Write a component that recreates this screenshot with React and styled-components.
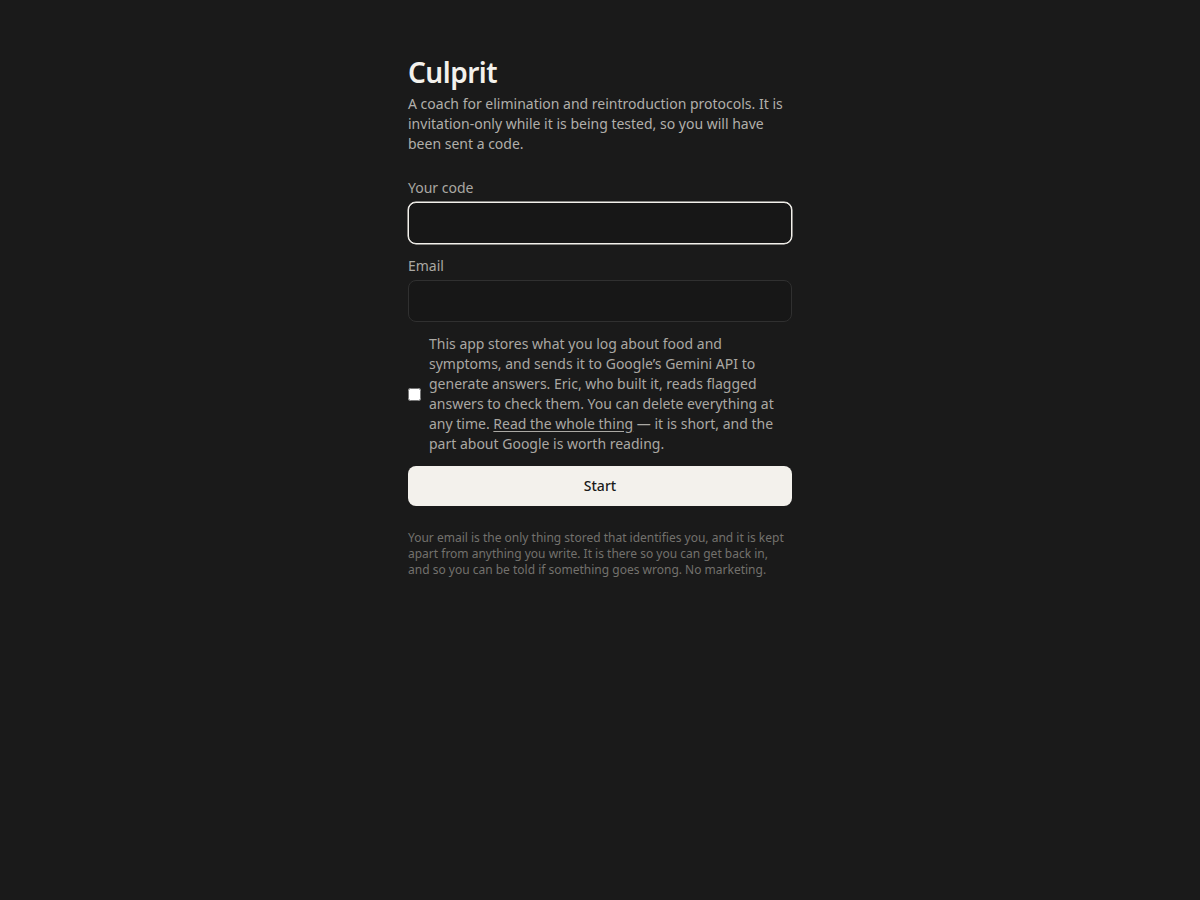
import styled, { createGlobalStyle } from "styled-components";

const GlobalStyle = createGlobalStyle`
  html, body {
    margin: 0;
    background: #1a1a1a;
    color: #f3f1ec;
    font-family: "Noto Sans", "Open Sans", sans-serif;
  }
  * { box-sizing: border-box; }
`;

const Page = styled.main`
  max-width: 384px;
  margin: 0 auto;
  padding-top: 55px;
  display: flex;
  flex-direction: column;
`;

const Title = styled.h1`
  margin: 0 0 4px;
  font-size: 28px;
  line-height: 35px;
  font-weight: 600;
  color: #f3f1ec;
  letter-spacing: -0.5px;
`;

const Intro = styled.p`
  margin: 0 0 24px;
  font-size: 14px;
  line-height: 20px;
  color: #b1afaa;
`;

const Form = styled.form`
  display: flex;
  flex-direction: column;
`;

const Field = styled.div`
  display: flex;
  flex-direction: column;
  gap: 4px;
  margin-bottom: 12px;
`;

const Label = styled.label`
  font-size: 14px;
  line-height: 20px;
  color: #aaa8a3;
`;

const Input = styled.input`
  height: 42px;
  width: 100%;
  padding: 0 12px;
  border-radius: 8px;
  border: 1px solid #303030;
  background: #171717;
  color: #f3f1ec;
  font: inherit;
  font-size: 15px;
  outline: none;

  &:focus {
    border-color: #f3f1ec;
    box-shadow: 0 0 0 0.5px #f3f1ec;
  }
`;

const Consent = styled.label`
  display: flex;
  align-items: center;
  gap: 8px;
  margin: 0 0 12px;
  font-size: 14px;
  line-height: 20px;
  color: #aaa8a3;

  input {
    margin: 1px 0 0;
    width: 13px;
    height: 13px;
    flex: none;
  }

  a {
    color: inherit;
    text-decoration: underline;
    text-underline-offset: 2px;
  }
`;

const Button = styled.button`
  height: 40px;
  width: 100%;
  border: none;
  border-radius: 8px;
  background: #f3f1ec;
  color: #1a1a1a;
  font: inherit;
  font-size: 14px;
  line-height: 18px;
  font-weight: 500;
  padding: 0 0 1px;
  cursor: pointer;
`;

const Footnote = styled.p`
  margin: 24px 0 0;
  font-size: 12px;
  line-height: 16px;
  color: #73716d;
`;

export default function App() {
  return (
    <>
      <GlobalStyle />
      <Page>
        <Title>Culprit</Title>
        <Intro>
          A coach for elimination and reintroduction protocols. It is invitation-only while it
          is being tested, so you will have been sent a code.
        </Intro>
        <Form onSubmit={(e) => e.preventDefault()}>
          <Field>
            <Label htmlFor="code">Your code</Label>
            <Input id="code" type="text" autoFocus />
          </Field>
          <Field>
            <Label htmlFor="email">Email</Label>
            <Input id="email" type="email" />
          </Field>
          <Consent>
            <input type="checkbox" />
            <span>
              This app stores what you log about food and symptoms, and sends it to Google’s
              Gemini API to generate answers. Eric, who built it, reads flagged answers to check
              them. You can delete everything at any time. <a href="#privacy">Read the whole thing</a>{" "}
              — it is short, and the part about Google is worth reading.
            </span>
          </Consent>
          <Button type="submit">Start</Button>
        </Form>
        <Footnote>
          Your email is the only thing stored that identifies you, and it is kept apart from
          anything you write. It is there so you can get back in, and so you can be told if
          something goes wrong. No marketing.
        </Footnote>
      </Page>
    </>
  );
}
